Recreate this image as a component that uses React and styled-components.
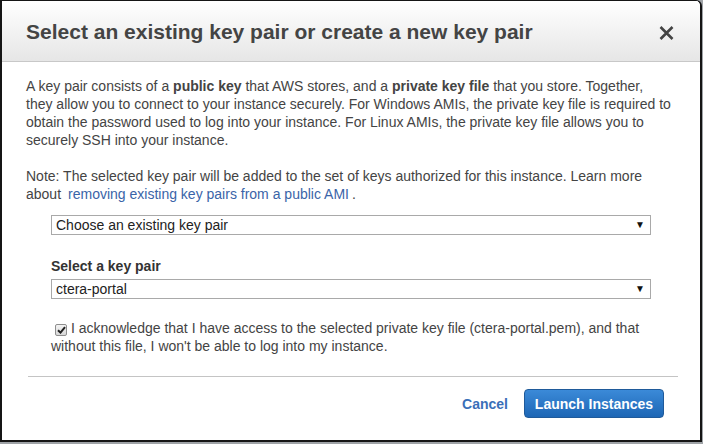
import styled, { createGlobalStyle } from 'styled-components';

const GlobalStyle = createGlobalStyle`
  html, body {
    margin: 0;
    padding: 0;
    background: #9fa3a7;
  }
  body {
    font-family: "Liberation Sans", Arial, sans-serif;
  }
`;

const Dialog = styled.div`
  box-sizing: border-box;
  width: 702px;
  height: 442px;
  background: #fff;
  border: 2px solid #151515;
  border-top-width: 1px;
  border-top-right-radius: 6px;
  display: flex;
  flex-direction: column;
  overflow: hidden;
`;

const Header = styled.div`
  height: 60px;
  flex-shrink: 0;
  display: flex;
  align-items: center;
  justify-content: space-between;
  padding: 0 26px 0 24px;
  background: linear-gradient(#ffffff, #e6e6e6);
  border-bottom: 1px solid #c8c8c8;
`;

const Title = styled.h1`
  margin: 2px 0 0;
  font-size: 21px;
  font-weight: bold;
  color: #444;
`;

const CloseButton = styled.button`
  border: none;
  background: none;
  padding: 0;
  margin-top: 4px;
  display: flex;
  cursor: pointer;
`;

const Body = styled.div`
  padding: 15px 24px 0 24px;
  font-size: 14px;
  line-height: 18px;
  color: #444;
`;

const Paragraph = styled.p`
  margin: 0 0 18px;
  width: 647px;
`;

const Link = styled.a`
  color: #3a64a8;
  text-decoration: none;
  margin: 0 3px 0 7px;
`;

const Field = styled.div`
  margin-left: 25px;
  width: 600px;
  margin-top: ${p => p.top || 0}px;
`;

const Label = styled.div`
  font-weight: bold;
  color: #333;
  margin-bottom: 4px;
`;

const SelectBox = styled.div`
  box-sizing: border-box;
  height: 20px;
  border: 1px solid #a9a9a9;
  display: flex;
  align-items: center;
  justify-content: space-between;
  padding: 0 5px 0 4px;
  color: #222;
  font-size: 14px;
`;

const Arrow = styled.span`
  font-size: 10px;
  color: #111;
`;

const Acknowledge = styled.div`
  margin: 20px 0 0 25px;
  width: 620px;
  color: #444;
`;

const CheckBox = styled.span`
  display: inline-flex;
  align-items: center;
  justify-content: center;
  box-sizing: border-box;
  width: 12px;
  height: 12px;
  margin: 0 4px 0 4px;
  vertical-align: -1px;
  border: 1px solid #8e8e8e;
  border-radius: 2px;
  background: linear-gradient(#f4f4f4, #d8d8d8);
`;

const Divider = styled.hr`
  border: none;
  border-top: 1px solid #c4c4c4;
  margin: 21px 0 0 2px;
  width: 650px;
`;

const Footer = styled.div`
  display: flex;
  justify-content: flex-end;
  align-items: center;
  gap: 16px;
  padding: 12px 36px 0 0;
`;

const CancelButton = styled.button`
  border: none;
  background: none;
  padding: 0;
  font-family: inherit;
  font-size: 14px;
  font-weight: bold;
  color: #3a6fb8;
  cursor: pointer;
`;

const PrimaryButton = styled.button`
  box-sizing: border-box;
  width: 140px;
  height: 29px;
  border: 1px solid #1f5a9a;
  border-radius: 4px;
  background: linear-gradient(#3b8ad8, #1d66b5);
  color: #fff;
  font-family: inherit;
  font-size: 14px;
  font-weight: bold;
  cursor: pointer;
`;

const CloseIcon = () => (
  <svg width="15" height="14" viewBox="0 0 15 14">
    <path d="M1.5 1 L13.5 13 M13.5 1 L1.5 13" stroke="#444" strokeWidth="2.6" />
  </svg>
);

const CheckMark = () => (
  <svg width="9" height="8" viewBox="0 0 9 8">
    <path d="M1 4.2 L3.5 6.6 L8 1.2" stroke="#222" strokeWidth="2" fill="none" />
  </svg>
);

const App = () => (
  <>
    <GlobalStyle />
    <Dialog>
      <Header>
        <Title>Select an existing key pair or create a new key pair</Title>
        <CloseButton aria-label="Close"><CloseIcon /></CloseButton>
      </Header>
      <Body>
        <Paragraph>
          A key pair consists of a <b>public key</b> that AWS stores, and a <b>private key file</b> that you store. Together, they allow you to connect to your instance securely. For Windows AMIs, the private key file is required to obtain the password used to log into your instance. For Linux AMIs, the private key file allows you to securely SSH into your instance.
        </Paragraph>
        <Paragraph>
          Note: The selected key pair will be added to the set of keys authorized for this instance. Learn more about<Link href="#">removing existing key pairs from a public AMI</Link>.
        </Paragraph>
        <Field top={-6}>
          <SelectBox>Choose an existing key pair<Arrow>▼</Arrow></SelectBox>
        </Field>
        <Field top={22}>
          <Label>Select a key pair</Label>
          <SelectBox>ctera-portal<Arrow>▼</Arrow></SelectBox>
        </Field>
        <Acknowledge>
          <CheckBox><CheckMark /></CheckBox>I acknowledge that I have access to the selected private key file (ctera-portal.pem), and that without this file, I won't be able to log into my instance.
        </Acknowledge>
        <Divider />
      </Body>
      <Footer>
        <CancelButton>Cancel</CancelButton>
        <PrimaryButton>Launch Instances</PrimaryButton>
      </Footer>
    </Dialog>
  </>
);

export default App;
